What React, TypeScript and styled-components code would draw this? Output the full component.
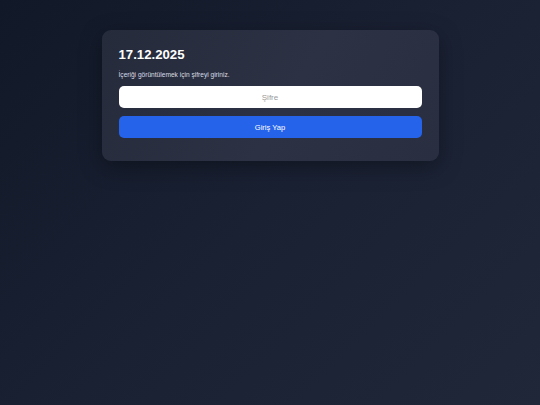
import styled, { createGlobalStyle } from "styled-components";

const GlobalStyle = createGlobalStyle`
  html, body {
    margin: 0;
    padding: 0;
    height: 100%;
  }
  body {
    font-family: "Liberation Sans", Arial, sans-serif;
    background: linear-gradient(135deg, #111827 0%, #1a2133 50%, #1f2739 100%);
    min-height: 405px;
  }
`;

const Page = styled.main`
  display: flex;
  justify-content: center;
  padding-top: 30px;
`;

const Card = styled.section`
  width: 337px;
  box-sizing: border-box;
  padding: 17px 17px 23px;
  border-radius: 9px;
  background: linear-gradient(120deg, #252b3b 0%, #2c3243 55%, #292f40 100%);
  box-shadow: 0 6px 22px rgba(0, 0, 0, 0.35);
  display: flex;
  flex-direction: column;
`;

const Title = styled.h1`
  margin: 0;
  font-size: 13.2px;
  line-height: 16px;
  font-weight: 700;
  color: #ffffff;
`;

const Hint = styled.p`
  margin: 7px 0 0;
  font-size: 6.6px;
  line-height: 9px;
  color: #d8dce4;
`;

const Form = styled.form`
  display: flex;
  flex-direction: column;
  gap: 8px;
  margin-top: 7px;
`;

const Input = styled.input`
  height: 22px;
  box-sizing: border-box;
  border: none;
  border-radius: 5px;
  background: #ffffff;
  text-align: center;
  font-family: inherit;
  font-size: 8px;
  color: #333;
  outline: none;
  &::placeholder {
    color: #9a9a9a;
  }
`;

const Button = styled.button`
  height: 22px;
  border: none;
  border-radius: 5px;
  background: #2563eb;
  color: #ffffff;
  font-family: inherit;
  font-size: 7.6px;
  cursor: pointer;
`;

function App() {
  return (
    <>
      <GlobalStyle />
      <Page>
        <Card>
          <Title>17.12.2025</Title>
          <Hint>İçeriği görüntülemek için şifreyi giriniz.</Hint>
          <Form onSubmit={(e) => e.preventDefault()}>
            <Input type="text" placeholder="Şifre" />
            <Button type="submit">Giriş Yap</Button>
          </Form>
        </Card>
      </Page>
    </>
  );
}

export default App;
